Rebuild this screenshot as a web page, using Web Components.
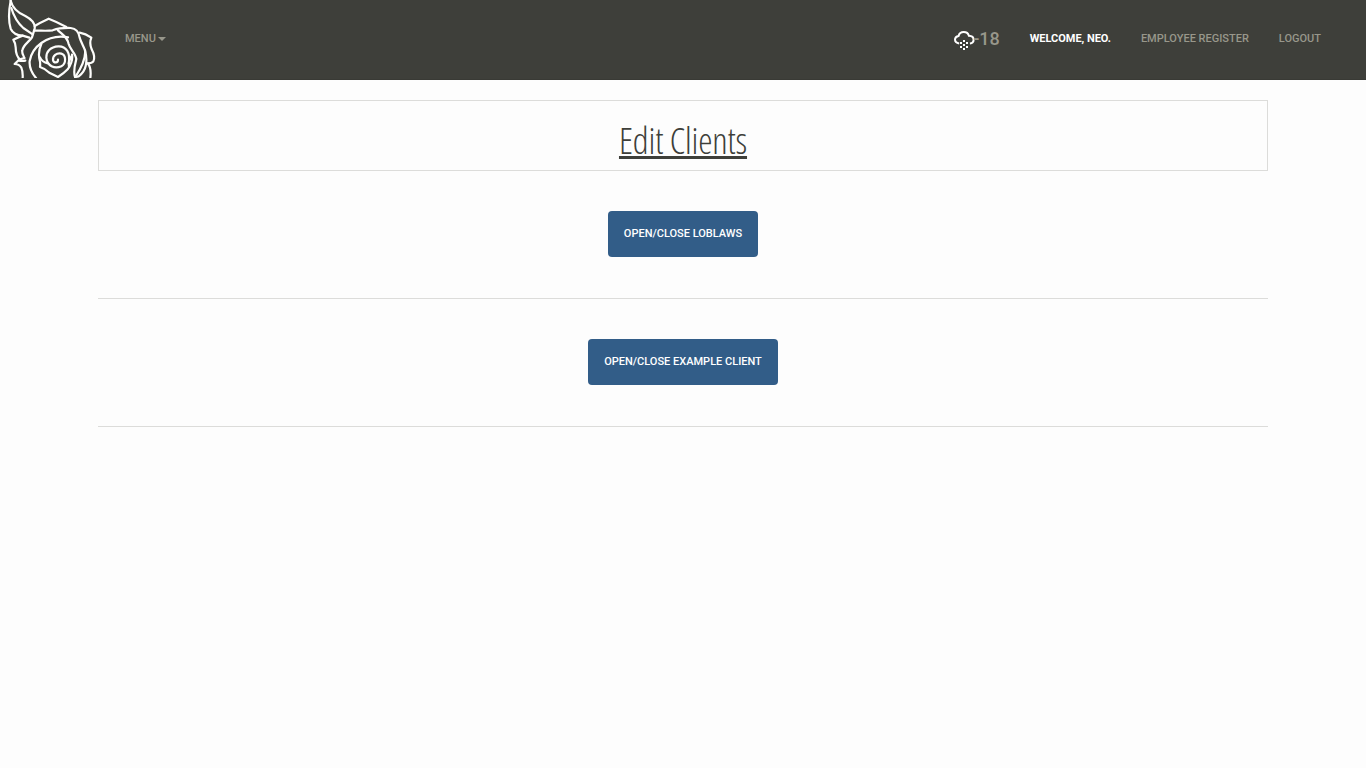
<!DOCTYPE html>
<html lang="en">
<head>
<meta charset="utf-8">
<title>Edit Clients</title>
<style>
body{margin:0;background:#fdfdfd;color:#3e3f3a;font-family:Roboto,"Liberation Sans",sans-serif;font-size:14px;line-height:20px}
</style>
</head>
<body>
<app-navbar>
  <rose-logo slot="brand"></rose-logo>
  <nav-item slot="left" caret>Menu</nav-item>
  <weather-badge slot="right">-18</weather-badge>
  <nav-item slot="right" strong>Welcome, Neo.</nav-item>
  <nav-item slot="right">Employee Register</nav-item>
  <nav-item slot="right">Logout</nav-item>
</app-navbar>
<page-container>
  <page-title>Edit Clients</page-title>
  <client-row>Open/Close Loblaws</client-row>
  <client-row>Open/Close Example Client</client-row>
</page-container>
<script>
const define = (name, html) => customElements.define(name, class extends HTMLElement {
  constructor() {
    super();
    this.attachShadow({ mode: 'open' }).innerHTML = html;
  }
});

define('app-navbar', `
<style>
:host{display:flex;box-sizing:border-box;height:80px;background:#3e3f3a;border-bottom:1px solid #393a35;padding-right:30px;align-items:flex-start}
.left{display:flex;margin-left:6px}
.right{display:flex;margin-left:auto}
</style>
<slot name="brand"></slot><div class="left"><slot name="left"></slot></div><div class="right"><slot name="right"></slot></div>`);

define('rose-logo', `
<style>
:host{display:block;width:104px;height:78px;overflow:hidden}
svg{display:block}
</style>
<svg width="104" height="78" viewBox="0 0 312 234" fill="none" stroke="#fdfdfb" stroke-width="6.6" stroke-linecap="round" stroke-linejoin="round">
<path d="M32 2C27 28 25 63 32 86C38 99 53 106 68 107L88 113"/>
<path d="M32 2C38 27 58 40 76 48C95 58 106 72 104 86L96 112C88 125 70 134 67 151C65 160 70 164 73 174"/>
<path d="M34 24C40 45 50 66 70 84L98 103"/>
<path d="M104 78Q120 68 146 56Q170 65 199 81"/>
<path d="M102 92C120 91 138 94 158 91Q180 83 212 84C232 86 237 98 239 113C243 127 250 138 255 151C258 174 243 205 226 231"/>
<path d="M68 107Q56 111 40 119Q46 129 47 142C47 159 52 173 62 181"/>
<path d="M73 174Q62 176 54 182L44 192Q57 192 64 203Q69 214 68 234"/>
<path d="M56 182Q70 183 76 182"/>
<path d="M204 112C176 107 145 114 124 129C103 144 92 166 89 183C87 204 97 221 108 234"/>
<path d="M174 91C190 106 203 113 206 132C210 148 226 158 229 177C224 196 219 213 225 231"/>
<path d="M239 98Q257 101 274 113C268 127 270 136 275 148C282 161 286 172 280 184Q276 190 263 190"/>
<path d="M255 151C260 170 260 187 257 198C254 213 244 223 236 229L226 231"/>
<path d="M263 190Q275 204 271 234"/>
<path d="M124 132C116 149 116 171 120 185Q121 192 120 201Q136 206 148 218L174 231Q193 219 203 208C213 194 219 180 216 164"/>
<path d="M120 172Q126 186 144 190"/>
<path d="M206 190C212 158 198 138 175 139C151 140 138 156 139 173C141 198 164 208 184 199C200 190 198 165 184 161C169 158 158 168 159 180C161 190 174 190 174 179"/>
<path d="M216 166Q204 184 207 201"/>
</svg>`);

define('nav-item', `
<style>
:host{display:block;padding:29px 15px 0;font-size:11px;line-height:20px;font-weight:500;text-transform:uppercase;color:#98978b;white-space:nowrap}
:host([strong]){color:#fff;font-weight:700;letter-spacing:-.03px}
i{display:none;width:0;height:0;margin-left:2px;vertical-align:middle;border:4px solid transparent;border-top-color:currentColor;border-bottom:0}
:host([caret]) i{display:inline-block}
</style>
<slot></slot><i></i>`);

define('weather-badge', `
<style>
:host{display:flex;padding:28px 15px 0;font-size:18px;line-height:21px;font-weight:500;color:#98978b}
svg{display:block;margin:1px -2px 0 0}
</style>
<svg width="21" height="21" viewBox="0 0 21 21" fill="none">
<path d="M5.2 14.4C2.6 14.1 1 12.6 1 10.6C1 8.6 2.5 7.2 4.6 6.9C5.2 4.5 7.2 3 9.7 3C12.2 3 14.3 4.5 14.9 6.7C18 6.8 19.6 8.4 19.6 10.7C19.6 12.7 18 14.2 15.9 14.4" stroke="#fff" stroke-width="2"/>
<g fill="#fff"><path d="M9 11h2v2H9zM6 13h2v2H6zM12 13h2v2h-2zM9 15h2v2H9zM6 17h2v2H6zM12 17h2v2h-2zM9 19h2v2H9z"/></g>
</svg><slot></slot>`);

define('page-container', `
<style>:host{display:block;width:1170px;margin:20px auto 0}</style><slot></slot>`);

define('page-title', `
<style>
:host{display:flex;justify-content:center;box-sizing:border-box;height:71px;border:1px solid #dcdcda;padding-top:20px}
h1{margin:0;font:300 36px/40px "Open Sans",sans-serif;font-stretch:75%;letter-spacing:-.13px;color:#3e3f3a;border:0;white-space:nowrap;text-decoration:underline;text-decoration-thickness:3px;text-underline-offset:2px;text-decoration-skip-ink:none}
</style>
<h1><slot></slot></h1>`);

define('client-row', `
<style>
:host{display:flex;justify-content:center;box-sizing:border-box;height:128px;padding-top:40px;border-bottom:1px solid #dcdcda;align-items:flex-start}
button{box-sizing:border-box;height:46px;margin:0;padding:0 16px;border:0;border-radius:4px;background:#325d88;color:#fff;font:500 11px/20px Roboto,sans-serif;text-transform:uppercase;white-space:nowrap}
</style>
<button type="button"><slot></slot></button>`);
</script>
</body>
</html>
